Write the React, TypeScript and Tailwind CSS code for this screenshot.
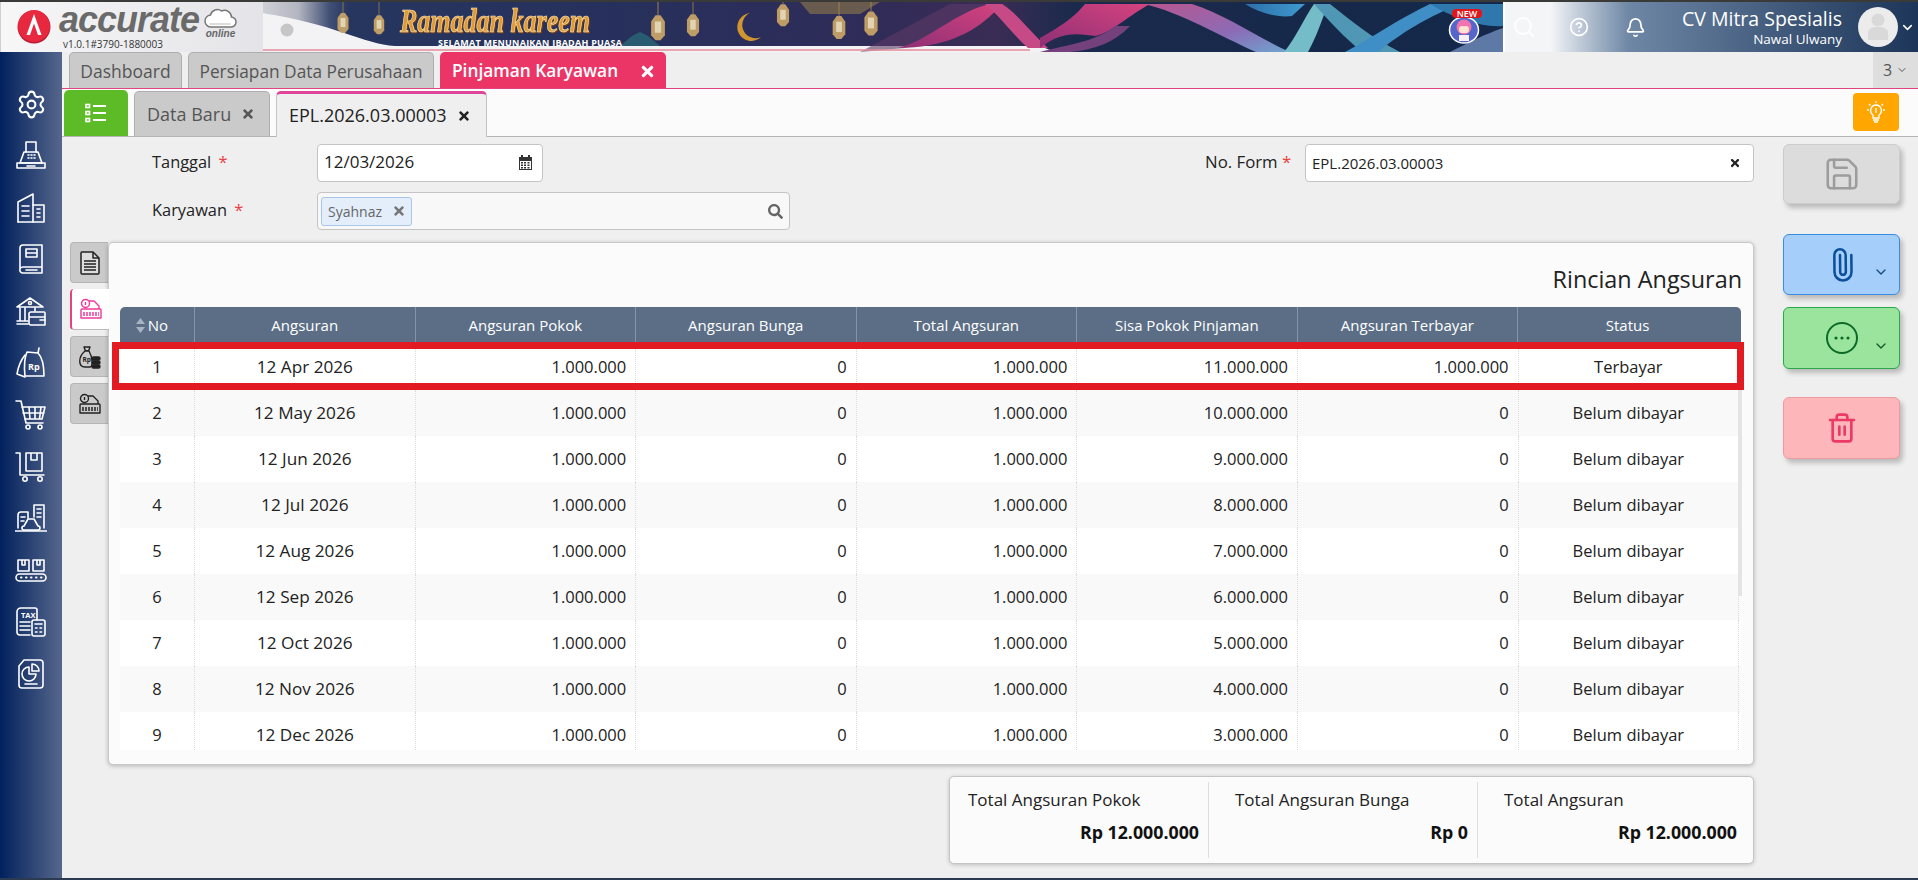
import { Bell, ChevronDown, CircleHelp, Paperclip, Save, Search, Settings, Trash2 } from 'lucide-react';
import { FaSearch, FaTimes } from 'react-icons/fa';

const ROWS = [
  { no: 1, date: '12 Apr 2026', sisa: '11.000.000', paid: '1.000.000', status: 'Terbayar' },
  { no: 2, date: '12 May 2026', sisa: '10.000.000', paid: '0', status: 'Belum dibayar' },
  { no: 3, date: '12 Jun 2026', sisa: '9.000.000', paid: '0', status: 'Belum dibayar' },
  { no: 4, date: '12 Jul 2026', sisa: '8.000.000', paid: '0', status: 'Belum dibayar' },
  { no: 5, date: '12 Aug 2026', sisa: '7.000.000', paid: '0', status: 'Belum dibayar' },
  { no: 6, date: '12 Sep 2026', sisa: '6.000.000', paid: '0', status: 'Belum dibayar' },
  { no: 7, date: '12 Oct 2026', sisa: '5.000.000', paid: '0', status: 'Belum dibayar' },
  { no: 8, date: '12 Nov 2026', sisa: '4.000.000', paid: '0', status: 'Belum dibayar' },
  { no: 9, date: '12 Dec 2026', sisa: '3.000.000', paid: '0', status: 'Belum dibayar' },
];

const HEADERS = ['Angsuran', 'Angsuran Pokok', 'Angsuran Bunga', 'Total Angsuran', 'Sisa Pokok Pinjaman', 'Angsuran Terbayar', 'Status'];

function Lantern({ x, y, s = 1 }: { x: number; y: number; s?: number }) {
  return (
    <g transform={`translate(${x} ${y}) scale(${s})`} opacity="0.9">
      <line x1="0" y1="-24" x2="0" y2="-7" stroke="#a98a4c" strokeWidth="0.8" />
      <path d="M-2 -7 L2 -7 L5.500 -2 L5.500 9 L2 13 L-2 13 L-5.500 9 L-5.500 -2 Z" fill="#cfa968" />
      <rect x="-2.500" y="-2" width="5" height="9" fill="#f5e6bd" />
    </g>
  );
}

// the banner is drawn in page coordinates, so the viewBox starts where the logo block ends
function Banner() {
  return (
    <svg viewBox="263 0 1240 50" width="1240" height="50" preserveAspectRatio="none" className="block shrink-0">
      <defs>
        <linearGradient id="navy" gradientUnits="userSpaceOnUse" x1="235" x2="1503" y1="0" y2="0">
          <stop offset="0" stopColor="#e4e4e8" />
          <stop offset="0.05" stopColor="#b3b5c0" />
          <stop offset="0.075" stopColor="#3f4e74" />
          <stop offset="0.09" stopColor="#26365f" />
          <stop offset="0.3" stopColor="#27305c" />
          <stop offset="0.5" stopColor="#2f2c58" />
          <stop offset="0.6" stopColor="#3a2c55" />
          <stop offset="0.66" stopColor="#1b2a4c" />
          <stop offset="1" stopColor="#13284a" />
        </linearGradient>
        <linearGradient id="pink" x1="0" x2="1" y1="1" y2="0">
          <stop offset="0" stopColor="#8d2f75" />
          <stop offset="1" stopColor="#d6437f" />
        </linearGradient>
        <linearGradient id="violet" x1="0" x2="1" y1="0" y2="1">
          <stop offset="0" stopColor="#b9558f" />
          <stop offset="0.6" stopColor="#8a6cb6" />
          <stop offset="1" stopColor="#6fa5cf" />
        </linearGradient>
        <linearGradient id="blue" x1="0" x2="1" y1="0" y2="0">
          <stop offset="0" stopColor="#2c6fa8" />
          <stop offset="1" stopColor="#3f9ad0" />
        </linearGradient>
      </defs>
      <rect x="263" width="1240" height="50" fill="#f3f3f5" />
      <path d="M235 0 H1503 V50 H1055 L1040 44 H395 C360 42 325 16 235 8 Z" fill="url(#navy)" />
      <path d="M263 50 H1040 V46 H263 Z" fill="#f3f3f5" />
      <circle cx="287" cy="28" r="6.500" fill="#c6c6c6" />

      <Lantern x={343} y={18} s={1} />
      <Lantern x={379} y={20} s={0.95} />
      <Lantern x={658} y={22} s={1.25} />
      <Lantern x={693} y={20} s={1.1} />
      <Lantern x={783} y={10} s={1.1} />
      <Lantern x={839} y={22} s={1.15} />
      <Lantern x={871} y={18} s={1.2} />
      <path d="M750 11 a14 14 0 1 0 11 24 a12 12 0 1 1 -11 -24 Z" fill="#cf962f" />
      <path d="M800 0 H880 L860 12 L810 12 Z" fill="#a68a45" opacity="0.5" />
      <path d="M620 44 L632 34 L640 30 L648 34 L660 44 Z" fill="#2b6f7b" opacity="0.7" />

      <path d="M860 50 L950 2 H1000 L905 46 Z" fill="#5e3a68" opacity="0.6" />
      <path d="M898 46 C930 38 955 10 990 2 H1003 C990 14 980 26 955 36 C940 42 920 46 898 46 Z" fill="url(#pink)" />
      <path d="M1002 2 C1018 12 1030 30 1048 46 H1028 C1012 32 1000 14 985 2 Z" fill="#c64a86" />
      <path d="M1040 46 C1062 28 1080 32 1096 34 C1112 30 1128 14 1150 2 H1085 C1075 14 1065 22 1040 36 Z" fill="url(#pink)" />
      <path d="M1040 50 C1070 42 1095 40 1115 24 L1130 24 C1115 40 1095 48 1070 50 Z" fill="#74417d" />
      <path d="M1144 2 H1192 C1225 12 1258 36 1290 50 H1256 C1220 34 1180 10 1144 2 Z" fill="url(#violet)" />
      <path d="M1245 2 H1305 L1292 14 C1275 16 1258 10 1245 2 Z" fill="url(#blue)" />
      <path d="M1284 50 C1296 36 1304 16 1314 2 H1328 C1322 18 1316 36 1308 50 Z" fill="#73bcc8" />
      <path d="M1314 2 H1330 C1350 18 1372 36 1400 50 H1362 C1345 36 1328 18 1314 2 Z" fill="#4f97b4" />
      <path d="M1345 50 C1375 34 1400 16 1430 2 H1460 C1420 18 1395 36 1378 50 Z" fill="#3f8fc6" />
      <path d="M1430 2 H1503 V24 C1480 26 1450 14 1430 2 Z" fill="#2f78ae" />
      <path d="M1450 50 C1470 40 1485 32 1503 26 V50 Z" fill="#5f79a6" />
      <path d="M75 48 H1030" stroke="#e58b98" strokeWidth="1.500" />

      <text x="400" y="30" fontFamily="'Liberation Serif', serif" fontStyle="italic" fontWeight="700" fontSize="34" fill="#e09a35" stroke="#f8e6bd" strokeWidth="0.7" textLength="190" lengthAdjust="spacingAndGlyphs" className="drop-shadow-[1px_1px_0_#7a3f10]">
        Ramadan kareem
      </text>
      <text x="438" y="43.500" fontFamily="'Open Sans', sans-serif" fontWeight="700" fontSize="9" fill="#ffffff" textLength="184" lengthAdjust="spacing">
        SELAMAT MENUNAIKAN IBADAH PUASA
      </text>

      {/* maskot */}
      <ellipse cx="1464" cy="28" rx="14.500" ry="13" fill="#5466c9" stroke="#ffffff" strokeWidth="1.500" />
      <ellipse cx="1464" cy="25" rx="7.500" ry="7.500" fill="#f273ae" />
      <rect x="1459" y="24" width="10" height="7" rx="3" fill="#ffe2cf" />
      <path d="M1459 33 h10 v6 h-10 Z" fill="#f6f0f4" />
      <rect x="1452" y="7" width="30" height="9" rx="4" fill="#e1161c" />
      <text x="1467" y="15" textAnchor="middle" fontFamily="'Open Sans', sans-serif" fontWeight="600" fontSize="9" fill="#ffffff">
        NEW
      </text>
    </svg>
  );
}

function LogoBlock() {
  return (
    <div className="w-[263px] shrink-0 h-[50px] bg-gradient-to-r from-[#f7f7f8] to-[#e4e4e8] flex items-start border-l border-[#cfcfcf]">
      <svg width="38" height="40" viewBox="0 0 38 40" className="mt-[4px] ml-[15px] shrink-0">
        <circle cx="18" cy="21" r="16.500" fill="#b81c32" />
        <circle cx="18" cy="20" r="16" fill="#e8283f" />
        <path d="M18 8 L25.500 29 L22 29 L18 17.500 L14 29 L10.500 29 Z" fill="#ffffff" />
      </svg>
      <div className="ml-[5px] w-[146px] flex flex-col shrink-0 mt-[-1.600px]">
        <span className="text-[36px] leading-[40px] italic font-bold whitespace-nowrap text-[#6a6a6a] font-['Liberation_Sans',sans-serif] tracking-[-1px]">accurate</span>
        <span className="text-[10px] leading-[12px] mt-[-2px] text-[#333] whitespace-nowrap font-['Open_Sans',sans-serif] ml-[4px]">v1.0.1#3790-1880003</span>
      </div>
      <div className="flex flex-col items-center mt-[5px] ml-[-1px]">
        <svg width="33" height="21" viewBox="0 0 32 21">
          <path d="M7 20 a6 6 0 0 1 -1 -12 a7 7 0 0 1 11 -4 a7 7 0 0 1 10 6 a5 5 0 0 1 -1 10 Z" fill="#ffffff" stroke="#777" strokeWidth="1.500" />
          <path d="M5 17 H26" stroke="#bbb" strokeWidth="1" />
        </svg>
        <span className="text-[10px] leading-[10px] italic font-bold text-[#666] font-['Liberation_Sans',sans-serif] mt-[1px]">online</span>
      </div>
    </div>
  );
}

function Header() {
  return (
    <div className="flex h-[50px] shrink-0">
      <LogoBlock />
      <Banner />
      <div className="flex-1 flex items-center bg-gradient-to-r from-[#f4f5f7] from-[11%] via-[#6e87a5] via-[30%] to-[#1c3558] text-white border-l-2 border-white font-['Open_Sans',sans-serif]">
        <Search size={24} strokeWidth={2} className="ml-[7px] text-white/90" />
        <CircleHelp size={20} className="ml-[33px]" />
        <Bell size={21} className="ml-[36px]" />
        <div className="ml-auto flex flex-col items-end leading-none">
          <span className="text-[19.500px] leading-[25px]">CV Mitra Spesialis</span>
          <span className="text-[13.500px] leading-[17px]">Nawal Ulwany</span>
        </div>
        <div className="ml-[16px] w-[40px] h-[40px] rounded-full bg-[#ececec] flex items-center justify-center overflow-hidden">
          <svg width="24" height="30" viewBox="0 0 24 30">
            <circle cx="12" cy="8" r="6.500" fill="#d9d9d9" />
            <path d="M2 28 V21 C2 16 7 15 12 15 C17 15 22 16 22 21 V28 Z" fill="#d9d9d9" />
          </svg>
        </div>
        <ChevronDown size={15} strokeWidth={2.500} className="ml-[2px] mr-[3px]" />
      </div>
    </div>
  );
}

function NavIcon({ children }: { children: React.ReactNode }) {
  return (
    <svg width="32" height="32" viewBox="0 0 32 32" fill="none" stroke="#ffffff" strokeWidth="1.600" strokeLinejoin="round" strokeLinecap="round" className="block">
      {children}
    </svg>
  );
}

const NAV_ICONS = [
  <Settings key="s" size={31} strokeWidth={1.600} color="#fff" />,
  <NavIcon key="fax">
    <path d="M11 12 V2 H21 V12" />
    <path d="M9 12 H23 L27 23 H5 Z" />
    <path d="M2 23 H30 V28 H2 Z" />
    <path d="M13 15 h1 M16 15 h1 M19 15 h1 M13 18 h1 M16 18 h1 M19 18 h1 M12 26 h8" />
  </NavIcon>,
  <NavIcon key="b">
    <path d="M3 30 V10 L18 2 V30" />
    <path d="M18 13 H29 V30 H3" />
    <path d="M7 14 H14 M7 19 H14 M7 24 H14 M22 17 H25 M22 21 H25 M22 25 H25" />
  </NavIcon>,
  <NavIcon key="book">
    <path d="M5 26 V5 a3 3 0 0 1 3 -3 H27 V30 H8 a3 3 0 0 1 -3 -4 a3 3 0 0 1 3 -2 H27" />
    <path d="M11 6 H22 V14 H11 Z M11 10 H22 M11 27 H22" />
  </NavIcon>,
  <NavIcon key="bank">
    <path d="M2 12 L15 3 L28 12 Z" />
    <circle cx="15" cy="8" r="1.500" />
    <path d="M5 13 V26 M10 13 V26 M20 13 V16 M2 29 H13 M2 26 H13" />
    <path d="M14 19 a2 2 0 0 1 2 -2 H29 a1 1 0 0 1 1 1 V30 H16 a2 2 0 0 1 -2 -2 Z M14 22 H30" />
    <path d="M25 25 H30" />
  </NavIcon>,
  <NavIcon key="bag">
    <path d="M10 8 C6 13 3 21 2 27 L10 30" />
    <path d="M12 5 L23 6 C27 10 29 16 29 29 H10 C9 20 9 12 12 5 Z" />
    <path d="M23 6 L24 1" />
    <text x="13" y="23" fontSize="9" fontWeight="700" fill="#ffffff" stroke="none" fontFamily="'Open Sans', sans-serif">Rp</text>
  </NavIcon>,
  <NavIcon key="cart">
    <path d="M1 2 H6 L11 24 H28" />
    <path d="M7 8 H30 L27 20 H10 M14 8 L15 20 M20 8 V20 M26 8 L24.500 20 M8 14 H29" />
    <circle cx="13" cy="28" r="2" />
    <circle cx="25" cy="28" r="2" />
  </NavIcon>,
  <NavIcon key="trolley">
    <path d="M1 2 H5 V24 H29" />
    <path d="M11 2 H27 V20 H11 Z M16 2 V9 H22 V2" />
    <circle cx="10" cy="28" r="2.200" />
    <circle cx="25" cy="28" r="2.200" />
  </NavIcon>,
  <NavIcon key="city">
    <path d="M3 26 V13 a3 3 0 0 1 3 -3 H13 V16" />
    <path d="M19 15 V3 H29 V26" />
    <path d="M6 15 H10 M6 19 H9 M22 7 H26 M22 11 H26 M22 15 H26" />
    <path d="M9 24 L13 17 H19 L23 24 a2 2 0 0 1 0 4 H9 a2 2 0 0 1 0 -4 Z" />
    <path d="M0 29 H32" />
  </NavIcon>,
  <NavIcon key="conv">
    <path d="M3 6 H14 V17 H3 Z M18 6 H29 V17 H18 Z M7 6 V11 H10 V6 M22 6 V11 H25 V6" />
    <rect x="1" y="20" width="30" height="7" rx="3.500" />
    <path d="M6 23.500 h.5 M11 23.500 h.5 M16 23.500 h.5 M21 23.500 h.5 M26 23.500 h.5" strokeWidth="2" />
  </NavIcon>,
  <NavIcon key="tax">
    <path d="M22 14 V4 a2 2 0 0 0 -2 -2 H6 a4 4 0 0 0 -4 4 V26 a3 3 0 0 0 3 3 H15" />
    <text x="6" y="12" fontSize="7.500" fontWeight="700" fill="#ffffff" stroke="none" fontFamily="'Open Sans', sans-serif">TAX</text>
    <path d="M5 16 H15 M5 20 H15 M5 24 H15" />
    <rect x="17" y="14" width="13" height="16" rx="2" />
    <path d="M20 18 H27 M20.500 22 h1.500 M25 22 h1.500 M20.500 26 h1.500 M25 26 h1.500" />
  </NavIcon>,
  <NavIcon key="report">
    <path d="M9 2 H25 a3 3 0 0 1 3 3 V27 a3 3 0 0 1 -3 3 H7 a3 3 0 0 1 -3 -3 V8 Z" />
    <path d="M14 9 a7 7 0 1 0 7 7 H14 Z" />
    <path d="M17 6 a7 7 0 0 1 7 7 H17 Z" />
    <path d="M10 26 H22" />
  </NavIcon>,
];

function Sidebar() {
  return (
    <div className="w-[62px] shrink-0 flex flex-col items-center pt-[36px] gap-[19.800px] bg-gradient-to-r from-[#02205c] to-[#56678c]">
      {NAV_ICONS.map((icon, i) => (
        <div key={i} className="w-[32px] h-[32px] flex items-center justify-center">
          {icon}
        </div>
      ))}
    </div>
  );
}

function TopTabs() {
  return (
    <div className="h-[37px] flex items-end pl-[7px] gap-[6px] border-b border-[#e0457f] relative shrink-0">
      <div className="h-[36px] w-[113px] pt-[2px] flex items-center justify-center rounded-t-[5px] border border-b-0 border-[#aeaeae] bg-[#cacaca] text-[#555] text-[17.500px]">Dashboard</div>
      <div className="h-[36px] w-[246px] pt-[2px] flex items-center justify-center rounded-t-[5px] border border-b-0 border-[#aeaeae] bg-[#cacaca] text-[#555] text-[17.300px]">Persiapan Data Perusahaan</div>
      <div className="h-[36px] w-[226px] pt-[2px] flex items-center justify-between pl-[12px] pr-[10px] rounded-t-[5px] bg-[#ec3567] text-white text-[17.300px] font-semibold">
        Pinjaman Karyawan
        <FaTimes size={17} />
      </div>
      <div className="absolute right-0 top-0 bottom-0 w-[45px] bg-[#dedede] flex items-center justify-center gap-[4px] text-[#555] text-[16px]">
        3 <ChevronDown size={12} />
      </div>
    </div>
  );
}

function SubTabs() {
  return (
    <div className="h-[48px] flex items-end pl-[2px] gap-[6px] border-b border-[#b5b5b5] bg-[#fbfbfb] shrink-0 relative">
      <div className="h-[46px] w-[64px] rounded-t-[5px] bg-[#5dbb27] flex items-center justify-center">
        <svg width="22" height="20" viewBox="0 0 22 20" fill="none" stroke="#fff" strokeWidth="1.600">
          <rect x="1" y="1.500" width="3.500" height="3" />
          <rect x="1" y="8.500" width="3.500" height="3" />
          <rect x="1" y="15.500" width="3.500" height="3" />
          <path d="M8 3 H21 M8 10 H21 M8 17 H21" strokeWidth="2" />
        </svg>
      </div>
      <div className="h-[45px] w-[136px] flex items-center justify-between pl-[12px] pr-[14px] rounded-t-[5px] border border-b-0 border-[#aeaeae] bg-[#cacaca] text-[#555] text-[18px]">
        Data Baru
        <FaTimes size={14} />
      </div>
      <div className="h-[46px] w-[211px] -mb-px flex items-center justify-between pl-[12px] pr-[15px] rounded-t-[5px] border border-b-0 border-[#c4c4c4] border-t-[3px] border-t-[#e0459a] bg-[#efefef] text-[#222] text-[18px]">
        EPL.2026.03.00003
        <FaTimes size={14} />
      </div>
      <div className="absolute right-[19px] top-[4px] w-[46px] h-[38px] rounded-[4px] bg-[#ffa600] flex items-center justify-center">
        <svg width="20" height="24" viewBox="0 0 20 24" fill="none" stroke="#fff" strokeWidth="1.300">
          <path d="M10 5 a5.500 5.500 0 0 0 -3 10 V18 H13 V15 a5.500 5.500 0 0 0 -3 -10 Z" />
          <path d="M7 20 H13 M8 22 H12 M10 8 V13 M10 1 V3 M3 4 L4.500 5.500 M17 4 L15.500 5.500 M1 10 H3 M17 10 H19" />
        </svg>
      </div>
    </div>
  );
}

function DocIcon({ active, kind }: { active?: boolean; kind: number }) {
  const c = active ? '#f0389c' : '#222';
  if (kind === 0) {
    return (
      <svg width="20" height="24" viewBox="0 0 20 24" fill="#ddd" stroke={c} strokeWidth="1.500" strokeLinejoin="round">
        <path d="M2 1 H13 L19 7 V22 a1 1 0 0 1 -1 1 H2 a1 1 0 0 1 -1 -1 V2 a1 1 0 0 1 1 -1 Z" />
        <path d="M13 1 V7 H19 M4 10 H16 M4 13 H16 M4 16 H16 M4 19 H16" fill="none" />
      </svg>
    );
  }
  if (kind === 2) {
    return (
      <svg width="22" height="24" viewBox="0 0 22 24" fill="none" stroke={c} strokeWidth="1.400" strokeLinejoin="round">
        <path d="M5 2 H11 L9.500 6 H6.500 Z" />
        <path d="M6 6 C-1 12 -1 22 6 22 H11 C14 22 14 13 10 6 Z" fill="#ccc" />
        <text x="3.500" y="17" fontSize="6.500" fontWeight="700" fill={c} stroke="none" fontFamily="'Open Sans', sans-serif">Rp</text>
        <rect x="13" y="12" width="8" height="3" rx="1.500" fill="#222" />
        <rect x="13" y="16" width="8" height="3" rx="1.500" fill="#222" />
        <rect x="13" y="20" width="8" height="3" rx="1.500" fill="#222" />
      </svg>
    );
  }
  return (
    <svg width="22" height="22" viewBox="0 0 22 22" fill="none" stroke={c} strokeWidth="1.400" strokeLinejoin="round">
      <path d="M6 6 V3 H14 L19 8 V11" />
      <path d="M2 11 H20 a1 1 0 0 1 1 1 V20 H1 V12 a1 1 0 0 1 1 -1 Z" />
      <path d="M3 15 H19 M3 17 H19" strokeDasharray="2 1" />
      <circle cx="5.500" cy="5.500" r="4" fill={active ? '#fff' : '#ccc'} />
      <path d="M5.500 4 V7" />
    </svg>
  );
}

function SideTab({ kind, active }: { kind: number; active?: boolean }) {
  return (
    <div
      className={
        active
          ? 'relative z-10 h-[41px] w-[39px] -mr-px rounded-l-[4px] border-l-2 border-l-[#e0457f] border-b border-b-[#bbb] bg-white flex items-center justify-center'
          : 'h-[41px] w-[38px] rounded-l-[4px] border border-r-0 border-[#b5b5b5] bg-[#cacaca] flex items-center justify-center'
      }
    >
      <DocIcon kind={kind} active={active} />
    </div>
  );
}

const CELL = 'w-[220.600px] h-full flex items-center border-r border-dotted border-[#dcdcdc]';

function InstallmentTable() {
  return (
    <div className="relative mt-[13px] mr-[12px] ml-[11px]">
      <div className="h-[37px] flex rounded-t-[5px] bg-[#5b6e86] text-white text-[15px]">
        <div className="w-[75px] flex items-center justify-center gap-[3px] pr-[10px] border-r border-[#8493a6]">
          <svg width="9" height="15" viewBox="0 0 9 15" fill="#a9b4c2">
            <path d="M4.500 0 L9 6 H0 Z M4.500 15 L0 9 H9 Z" />
          </svg>
          No
        </div>
        {HEADERS.map((h, i) => (
          <div key={h} className={i === 6 ? 'w-[223px] flex items-center justify-center pr-[4px]' : 'w-[220.600px] flex items-center justify-center border-r border-[#8493a6]'}>
            {h}
          </div>
        ))}
      </div>
      <div className="h-[406px] overflow-hidden">
        {ROWS.map((r, i) => (
          <div key={r.no} className={i % 2 === 0 ? 'h-[46px] flex items-center bg-white text-[16.500px] text-[#222]' : 'h-[46px] flex items-center bg-[#f9f9f9] text-[16.500px] text-[#222]'}>
            <div className="w-[75px] h-full flex items-center justify-center border-r border-dotted border-[#dcdcdc]">{r.no}</div>
            <div className={`${CELL} justify-center text-[17.200px]`}>{r.date}</div>
            <div className={`${CELL} justify-end pr-[9px]`}>1.000.000</div>
            <div className={`${CELL} justify-end pr-[9px]`}>0</div>
            <div className={`${CELL} justify-end pr-[9px]`}>1.000.000</div>
            <div className={`${CELL} justify-end pr-[9px]`}>{r.sisa}</div>
            <div className={`${CELL} justify-end pr-[9px]`}>{r.paid}</div>
            <div className={`${CELL} justify-center`}>{r.status}</div>
          </div>
        ))}
      </div>
      <div className="absolute right-[-1px] top-[37px] h-[252px] w-[4px] bg-[#e4e4e4]" />
      <div className="absolute left-[-8px] right-[-3px] top-[35px] h-[48px] border-[7px] border-[#e21a22]" />
    </div>
  );
}

function SummaryCell({ label, value, className }: { label: string; value: string; className: string }) {
  return (
    <div className={`h-[76px] pt-[6px] flex flex-col ${className}`}>
      <span className="text-[17px] leading-[24px] text-[#222]">{label}</span>
      <span className="text-[17.800px] leading-[24px] mt-[8px] text-right font-bold text-[#111]">{value}</span>
    </div>
  );
}

function ActionButtons() {
  return (
    <div className="w-[117px] ml-[29px] flex flex-col pt-[7px]">
      <div className="h-[60px] rounded-[6px] border border-[#cdcdcd] bg-[#dcdcdc] shadow-[3px_4px_5px_rgba(0,0,0,0.22)] flex items-center justify-center">
        <Save size={38} strokeWidth={1.600} className="text-[#9c9c9c]" />
      </div>
      <div className="relative mt-[30px] h-[61px] rounded-[6px] border border-[#3a8ce0] bg-[#a6cefb] shadow-[3px_4px_5px_rgba(0,0,0,0.22)] flex items-center justify-center">
        <Paperclip size={34} strokeWidth={1.800} className="text-[#0c4f9b] -rotate-45" />
        <ChevronDown size={16} className="absolute right-[10px] top-[29px] text-[#174b7e]" />
      </div>
      <div className="relative mt-[12px] h-[62px] rounded-[6px] border border-[#28a94b] bg-[#9be49d] shadow-[3px_4px_5px_rgba(0,0,0,0.22)] flex items-center justify-center">
        <svg width="34" height="34" viewBox="0 0 34 34" fill="none" stroke="#0c6a26" strokeWidth="2">
          <circle cx="17" cy="17" r="15" />
          <circle cx="11" cy="17" r="1.600" fill="#0c6a26" stroke="none" />
          <circle cx="17" cy="17" r="1.600" fill="#0c6a26" stroke="none" />
          <circle cx="23" cy="17" r="1.600" fill="#0c6a26" stroke="none" />
        </svg>
        <ChevronDown size={16} className="absolute right-[10px] top-[30px] text-[#125b28]" />
      </div>
      <div className="mt-[28px] h-[62px] rounded-[6px] border border-[#ee9a9f] bg-[#fdb7bb] shadow-[3px_4px_5px_rgba(0,0,0,0.22)] flex items-center justify-center">
        <Trash2 size={32} strokeWidth={2} className="text-[#ec3a67]" />
      </div>
    </div>
  );
}

function Content() {
  return (
    <div className="flex flex-1 min-h-0">
      <div className="w-[1692px] flex flex-col">
        <div className="flex items-start pt-[7px] h-[55px]">
          <div className="ml-[90px] w-[165px] text-[16.400px] text-[#222] leading-[36px]">
            Tanggal <span className="text-[#e84040] ml-[3px]">*</span>
          </div>
          <div className="w-[226px] h-[38px] rounded-[4px] border border-[#c4c4c4] bg-white flex items-center justify-between pl-[6px] pr-[9px] pb-[2px] text-[17px] text-[#222]">
            12/03/2026
            <svg width="15" height="16" viewBox="0 0 15 16" className="mt-[2px]">
              <path d="M1 2 H14 V15 H1 Z M3 0 h2 v3 h-2 Z M10 0 h2 v3 h-2 Z" fill="#333" />
              <path d="M2 6 H13 V14 H2 Z" fill="#fff" />
              <path d="M3 7 h2 v1.500 h-2 Z M6 7 h2 v1.500 h-2 Z M9.500 7 h2 v1.500 h-2 Z M3 9.500 h2 v1.500 h-2 Z M6 9.500 h2 v1.500 h-2 Z M9.500 9.500 h2 v1.500 h-2 Z M3 12 h2 v1.500 h-2 Z M6 12 h2 v1.500 h-2 Z M9.500 12 h2 v1.500 h-2 Z" fill="#333" />
            </svg>
          </div>
          <div className="ml-[662px] w-[100px] text-[16.800px] text-[#222] leading-[36px]">
            No. Form <span className="text-[#e84040]">*</span>
          </div>
          <div className="w-[449px] h-[38px] rounded-[4px] border border-[#c4c4c4] bg-white flex items-center justify-between pl-[6px] pr-[12px] text-[15px] text-[#222]">
            EPL.2026.03.00003
            <FaTimes size={12} />
          </div>
        </div>
        <div className="flex items-start h-[50px]">
          <div className="ml-[90px] w-[165px] text-[16.400px] text-[#222] leading-[36px]">
            Karyawan <span className="text-[#e84040] ml-[3px]">*</span>
          </div>
          <div className="w-[473px] h-[38px] rounded-[4px] border border-[#c4c4c4] bg-[#f8f8f8] flex items-center justify-between pl-[3px] pr-[6px]">
            <div className="h-[29px] w-[91px] rounded-[3px] border border-[#a9c5e8] bg-[#e4eefb] flex items-center justify-between pl-[6px] pr-[5px] text-[14px] text-[#666]">
              Syahnaz
              <FaTimes size={14} className="text-[#777]" />
            </div>
            <FaSearch size={15} className="text-[#666]" />
          </div>
        </div>
        <div className="flex items-start">
          <div className="w-[8px]" />
          <div className="flex flex-col gap-[6px] w-[38px] shrink-0">
            <SideTab kind={0} />
            <SideTab kind={1} active />
            <SideTab kind={2} />
            <SideTab kind={1} />
          </div>
          <div className="w-[1646px] h-[523px] rounded-[5px] border border-[#c9c9c9] bg-[#fbfbfb] shadow-[0_1px_4px_rgba(0,0,0,0.25)]">
            <div className="text-right pr-[11px] pt-[21px] text-[23.400px] leading-[30px] text-[#222]">Rincian Angsuran</div>
            <InstallmentTable />
          </div>
        </div>
        <div className="self-end mt-[11px] w-[805px] h-[88px] rounded-[5px] border border-[#c4c4c4] bg-[#fbfbfb] shadow-[0_1px_4px_rgba(0,0,0,0.2)] flex items-center">
          <SummaryCell label="Total Angsuran Pokok" value="Rp 12.000.000" className="w-[259px] pl-[18px] pr-[9px] border-r border-[#dedede]" />
          <SummaryCell label="Total Angsuran Bunga" value="Rp 0" className="w-[269px] pl-[26px] pr-[9px] border-r border-[#dedede]" />
          <SummaryCell label="Total Angsuran" value="Rp 12.000.000" className="w-[275px] pl-[26px] pr-[16px]" />
        </div>
      </div>
      <ActionButtons />
    </div>
  );
}

export default function App() {
  return (
    <div className="w-[1918px] h-[880px] flex flex-col overflow-hidden bg-[#efefef] font-['Open_Sans',sans-serif]">
      <div className="h-[2px] bg-[#3a3a38] shrink-0" />
      <Header />
      <div className="flex flex-1 min-h-0">
        <Sidebar />
        <div className="flex-1 flex flex-col min-w-0">
          <TopTabs />
          <SubTabs />
          <Content />
        </div>
      </div>
      <div className="h-[2px] bg-[#2b3a50] shrink-0" />
    </div>
  );
}
